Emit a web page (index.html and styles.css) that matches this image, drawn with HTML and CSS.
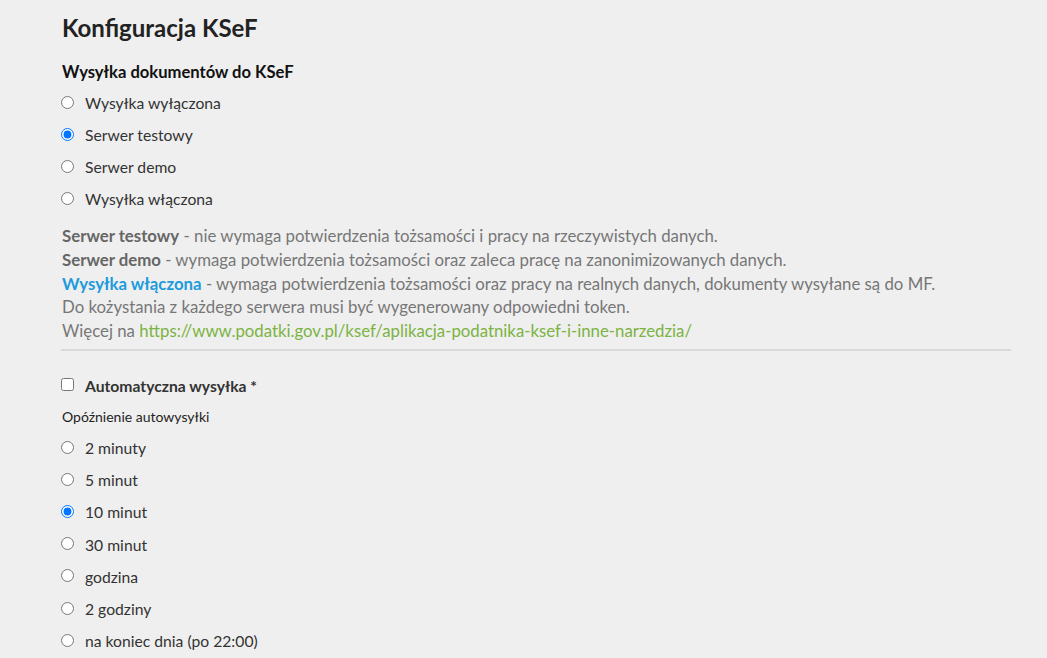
FILE: index.html
```html
<!DOCTYPE html>
<html lang="pl">
<head>
<meta charset="utf-8">
<title>Konfiguracja KSeF</title>
<link rel="stylesheet" href="styles.css">
</head>
<body>
<main class="page">
  <h1 class="title">Konfiguracja KSeF</h1>
  <h2 class="section-title">Wysyłka dokumentów do KSeF</h2>
  <div class="options first">
    <label class="option"><input type="radio" name="mode"><span>Wysyłka wyłączona</span></label>
    <label class="option"><input type="radio" name="mode" checked><span>Serwer testowy</span></label>
    <label class="option"><input type="radio" name="mode"><span>Serwer demo</span></label>
    <label class="option"><input type="radio" name="mode"><span>Wysyłka włączona</span></label>
  </div>
  <div class="info">
    <p><b>Serwer testowy</b> - nie wymaga potwierdzenia tożsamości i pracy na rzeczywistych danych.</p>
    <p><b>Serwer demo</b> - wymaga potwierdzenia tożsamości oraz zaleca pracę na zanonimizowanych danych.</p>
    <p><b class="blue">Wysyłka włączona</b> - wymaga potwierdzenia tożsamości oraz pracy na realnych danych, dokumenty wysyłane są do MF.</p>
    <p>Do kożystania z każdego serwera musi być wygenerowany odpowiedni token.</p>
    <p>Więcej na <a href="#">https://www.podatki.gov.pl/ksef/aplikacja-podatnika-ksef-i-inne-narzedzia/</a></p>
  </div>
  <hr class="divider">
  <label class="option check"><input type="checkbox"><span>Automatyczna wysyłka *</span></label>
  <div class="sub-label">Opóźnienie autowysyłki</div>
  <div class="options delays">
    <label class="option"><input type="radio" name="delay"><span>2 minuty</span></label>
    <label class="option"><input type="radio" name="delay"><span>5 minut</span></label>
    <label class="option"><input type="radio" name="delay" checked><span>10 minut</span></label>
    <label class="option"><input type="radio" name="delay"><span>30 minut</span></label>
    <label class="option"><input type="radio" name="delay"><span>godzina</span></label>
    <label class="option"><input type="radio" name="delay"><span>2 godziny</span></label>
    <label class="option"><input type="radio" name="delay"><span>na koniec dnia (po 22:00)</span></label>
  </div>
</main>
</body>
</html>
```
FILE: styles.css
```css
html, body {
  margin: 0;
  padding: 0;
  background: #efefef;
}
body {
  font-family: Lato, "Noto Sans", sans-serif;
  color: #333;
}
.page {
  width: 950px;
  margin-left: 61px;
  padding-top: 12px;
}
.title {
  margin: 0;
  font-size: 24px;
  line-height: 32px;
  font-weight: 700;
  color: #222;
  padding-left: 1px;
}
.section-title {
  margin: 16px 0 0;
  font-size: 16.6px;
  line-height: 24px;
  font-weight: 700;
  color: #111;
  padding-left: 1px;
}
.options {
  display: flex;
  flex-direction: column;
}
.option {
  display: flex;
  align-items: center;
  height: 32px;
  font-size: 15.7px;
  color: #333;
}
.option input {
  margin: 0 11px 0 0;
  width: 13px;
  height: 13px;
  flex: none;
  position: relative;
  top: -1px;
}
.options.first {
  margin-top: 3px;
}
.info {
  margin-top: 9px;
  font-size: 16.8px;
  line-height: 23.8px;
  color: #777;
  padding-left: 1px;
}
.info p {
  margin: 0;
  white-space: nowrap;
}
.info b {
  color: #666;
  font-weight: 700;
}
.info b.blue {
  color: #1d9bdc;
}
.info a {
  color: #7cb342;
  text-decoration: none;
}
.divider {
  margin: 6px 0 0;
  border: 0;
  height: 2px;
  background: #d9d9d9;
}
.check {
  margin-top: 19px;
  font-weight: 700;
  color: #333;
}
.sub-label {
  font-size: 14px;
  line-height: 20px;
  margin-top: 5px;
  color: #222;
  padding-left: 1px;
}
.options.delays {
  margin-top: 5px;
}
.delays .option {
  height: 32.2px;
}
```
